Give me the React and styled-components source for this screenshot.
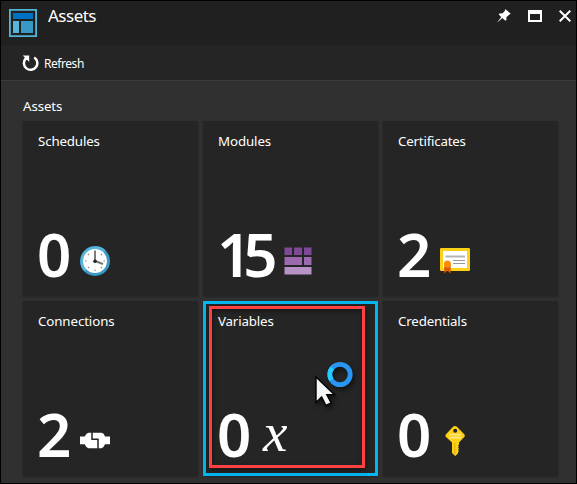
import React from "react";
import styled, { createGlobalStyle } from "styled-components";

const GlobalStyle = createGlobalStyle`
  * { box-sizing: border-box; }
  body { margin: 0; background: #000; }
`;

const Blade = styled.div`
  width: 577px;
  height: 484px;
  display: flex;
  flex-direction: column;
  overflow: hidden;
  border: 1px solid #000;
  background: #303030;
  color: #fff;
  font-family: "Noto Sans", "Open Sans", sans-serif;
`;

const Header = styled.header`
  height: 44px;
  flex: none;
  display: flex;
  align-items: flex-start;
  padding: 8px 5px 0 8px;
  background: #202020;
`;

const Title = styled.h1`
  margin: -5px auto 0 11px;
  font-size: 17px;
  line-height: 24px;
  font-weight: 400;
  letter-spacing: -0.5px;
`;

const WindowControls = styled.div`
  display: flex;
  align-items: center;
  height: 14px;
  gap: 17px;
`;

const Toolbar = styled.div`
  height: 36px;
  flex: none;
  display: flex;
  align-items: center;
  gap: 5px;
  padding: 2px 0 0 21px;
  background: #252525;
  border-bottom: 1px solid #3c3c3c;
`;

const ToolLabel = styled.span`
  font-size: 12px;
  line-height: 16px;
  letter-spacing: -0.45px;
`;

const Content = styled.main`
  padding: 16px 0 0 22px;
`;

const SectionTitle = styled.h2`
  margin: 0 0 6px;
  font-size: 13.3px;
  line-height: 18px;
  font-weight: 400;
  letter-spacing: -0.1px;
`;

const Grid = styled.div`
  display: grid;
  grid-template-columns: repeat(3, 175px);
  grid-auto-rows: 175px;
  gap: 5px;
`;

const TileBox = styled.section`
  position: relative;
  display: flex;
  flex-direction: column;
  justify-content: space-between;
  padding: 11px 15px 10px;
  background: #252525;
  box-shadow: 0 1px 2px rgba(0, 0, 0, 0.28);
  outline: ${(p) => (p.$selected ? "3px solid #00b7f1" : "none")};
  outline-offset: -3px;
`;

const TileTitle = styled.h3`
  margin: 0;
  font-size: 13.3px;
  line-height: 18px;
  font-weight: 400;
  letter-spacing: ${(p) => p.$spacing}px;
`;

const Metric = styled.div`
  display: flex;
  height: 60px;
  align-items: center;
`;

const Count = styled.span`
  width: ${(p) => p.$width}px;
  flex: none;
  font-size: 60px;
  line-height: 60px;
  font-weight: 600;
  letter-spacing: -8px;
  white-space: nowrap;
  margin: -5px 0 0 -1px;
`;

const Glyph = styled.svg`
  display: block;
  flex: none;
  margin-top: ${(p) => p.$drop || 0}px;
`;

const VariableGlyph = styled.span`
  width: 30px;
  margin-top: -7px;
  padding-left: 3px;
  font: italic 400 55px/56px "Liberation Serif", serif;
`;

const Highlight = styled.div`
  position: absolute;
  inset: 5px 13px 8px 6px;
  border: 3px solid #fb4141;
  box-shadow: 1px 2px 5px rgba(0, 0, 0, 0.5), inset 1px 2px 5px rgba(0, 0, 0, 0.45);
`;

const Pointer = styled.svg`
  position: absolute;
  left: 109px;
  top: 57px;
  overflow: visible;
  filter: drop-shadow(2px 3px 2px rgba(0, 0, 0, 0.5));
`;

const DashboardIcon = () => (
  <Glyph width="28" height="28" viewBox="0 0 28 28">
    <path d="M.8 .8H27.2V27.2H.8Z" fill="#202020" stroke="#51b4d9" strokeWidth="2" />
    <path d="M4 4H24V10H4Z" fill="#0072c6" />
    <path d="M4 12H10V24H4Z" fill="#59b4d9" />
    <path d="M12 12H24V24H12Z" fill="#3999c6" />
  </Glyph>
);

const PinIcon = () => (
  <Glyph width="14" height="14" viewBox="0 0 14 14" fill="#fff">
    <path d="M8.2 0 13.8 4.8 12.4 5.4 9.4 8.2 9.4 11.2 8 11.5 5.3 9 0 13.8 4.2 8 1.8 5.6 2.4 4.4 5.6 4.3 8.1 1.4Z" />
  </Glyph>
);

const MaximizeIcon = () => (
  <Glyph width="14" height="12" viewBox="0 0 14 12">
    <path fill="#fff" fillRule="evenodd" d="M0 0H14V12H0ZM2 4V10H12V4Z" />
  </Glyph>
);

const CloseIcon = () => (
  <Glyph width="12" height="12" viewBox="0 0 12 12">
    <path d="m.7.7 10.6 10.6m0-10.6L.7 11.3" stroke="#fff" strokeWidth="2" />
  </Glyph>
);

const RefreshIcon = () => (
  <Glyph width="17" height="17" viewBox="0 0 17 17">
    <path d="M12.2 2.5A6.7 6.7 0 1 1 3.6 3.7" fill="none" stroke="#fff" strokeWidth="2.5" />
    <path d="M.7 .4H7.2V6.9L5.1 4.8 3.2 5.4 2.8 2.5Z" fill="#fff" />
  </Glyph>
);

const ClockIcon = () => (
  <Glyph width="30" height="30" viewBox="0 0 30 30" $drop={9}>
    <circle cx="15" cy="15" r="15" fill="#3999c6" />
    <path d="M4.4 25.6A15 15 0 0 1 25.6 4.4Z" fill="#59b4d9" />
    <circle cx="15" cy="15" r="12" fill="#fff" />
    <g stroke="#8a8a8a" strokeWidth="1.2">
      {[45, 90, 135, 180, 225, 270, 315].map((angle) => (
        <path key={angle} d="M15 5V6.6" transform={`rotate(${angle} 15 15)`} />
      ))}
    </g>
    <path d="M15 4.5V15L23 18" fill="none" stroke="#777" strokeWidth="1.9" />
    <circle cx="15" cy="15.3" r="1.8" fill="#222" />
  </Glyph>
);

const ModulesIcon = () => (
  <Glyph width="28" height="28" viewBox="0 0 28 28" $drop={10}>
    <path d="M.5 .5H8V8H.5ZM10 .5H18V8H10ZM20 .5H27.5V8H20Z" fill="#804998" />
    <path d="M.5 10H18V18H.5ZM20 10H27.5V18H20Z" fill="#9b6aae" />
    <path d="M.5 20H27.5V27.5H.5Z" fill="#b792c5" />
  </Glyph>
);

const CertificateIcon = () => (
  <Glyph width="30" height="26" viewBox="0 0 30 26" $drop={9}>
    <rect width="30" height="23" rx="1.2" fill="#fcd116" />
    <path d="M3 3H27V20H3Z" fill="#fff" />
    <path d="M5.5 8.5H25" stroke="#b4b4b4" strokeWidth="2" />
    <path d="M13 12.5H25M13 15.5H25" stroke="#999" strokeWidth="1" />
    <path d="M4.2 16H10.6V25.5L7.4 22.5 4.2 25.5Z" fill="#dd5900" />
    <circle cx="7.4" cy="16" r="3.5" fill="#ff8c00" />
  </Glyph>
);

const ConnectionIcon = () => (
  <Glyph width="30" height="17" viewBox="0 0 30 17" $drop={9}>
    <path d="M0 4.5H4.7L6.5 1.8 8.5.7H21.5L23.7 1.8 25 4.5H30V12.3H25L23.5 15 21.5 16.2H8.5L6.3 15 4.7 12.3H0Z" fill="#fff" />
    <path d="M12 0V7.2H18V17" fill="none" stroke="#252525" strokeWidth="1.5" />
  </Glyph>
);

const VariableIcon = () => <VariableGlyph>x</VariableGlyph>;

const KeyIcon = () => (
  <Glyph width="30" height="30" viewBox="0 0 30 30" $drop={9}>
    <path fill="#fcd116" fillRule="evenodd" d="M13 .8Q15 -.8 17 .8L24.2 8.2Q25.5 9.8 24.2 11L19 16.4V18.5L18 19.5 19 20.5 18 21.6 19 22.7 18 23.8 19 25 18 26.2V27.4L15.2 30 12 27V16.4L6 11Q4.8 9.7 6 8.2ZM15.2 2.8A2 2 0 1 0 15.2 6.8A2 2 0 1 0 15.2 2.8Z" />
    <path d="M9 8.7H21M9 11.7H21" stroke="#fee87e" strokeWidth="1.7" />
    <path d="M14.8 17V28" stroke="#e5ac00" strokeWidth="1" />
  </Glyph>
);

const BusyPointer = () => (
  <Pointer width="46" height="46" viewBox="0 0 46 46">
    <path d="M4 19V44.5L9.6 39 14 47.5 19.2 45 14.8 36.8H22.5Z" fill="#f5f5f5" stroke="#000" strokeWidth="1.4" />
    <circle cx="28" cy="16.5" r="10.2" fill="none" stroke="#2996f3" strokeWidth="4.8" />
    <path d="M20.2 10A10.2 10.2 0 0 0 19.2 21.7" fill="none" stroke="#22cdfb" strokeWidth="4.8" />
  </Pointer>
);

const tiles = [
  { title: "Schedules", count: 0, icon: <ClockIcon />, width: 43, spacing: -0.15 },
  { title: "Modules", count: 15, icon: <ModulesIcon />, width: 67, spacing: -0.1 },
  { title: "Certificates", count: 2, icon: <CertificateIcon />, width: 43, spacing: -0.2 },
  { title: "Connections", count: 2, icon: <ConnectionIcon />, width: 43, spacing: -0.1 },
  { title: "Variables", count: 0, icon: <VariableIcon />, width: 43, spacing: -0.15, selected: true },
  { title: "Credentials", count: 0, icon: <KeyIcon />, width: 43, spacing: -0.15 },
];

const Tile = ({ title, count, icon, width, spacing, selected }) => (
  <TileBox $selected={selected}>
    <TileTitle $spacing={spacing}>{title}</TileTitle>
    <Metric>
      <Count $width={width}>{count}</Count>
      {icon}
    </Metric>
    {selected && <Highlight />}
    {selected && <BusyPointer />}
  </TileBox>
);

export default function App() {
  return (
    <>
      <GlobalStyle />
      <Blade>
        <Header>
          <DashboardIcon />
          <Title>Assets</Title>
          <WindowControls>
            <PinIcon />
            <MaximizeIcon />
            <CloseIcon />
          </WindowControls>
        </Header>
        <Toolbar>
          <RefreshIcon />
          <ToolLabel>Refresh</ToolLabel>
        </Toolbar>
        <Content>
          <SectionTitle>Assets</SectionTitle>
          <Grid>
            {tiles.map((tile) => (
              <Tile key={tile.title} {...tile} />
            ))}
          </Grid>
        </Content>
      </Blade>
    </>
  );
}
